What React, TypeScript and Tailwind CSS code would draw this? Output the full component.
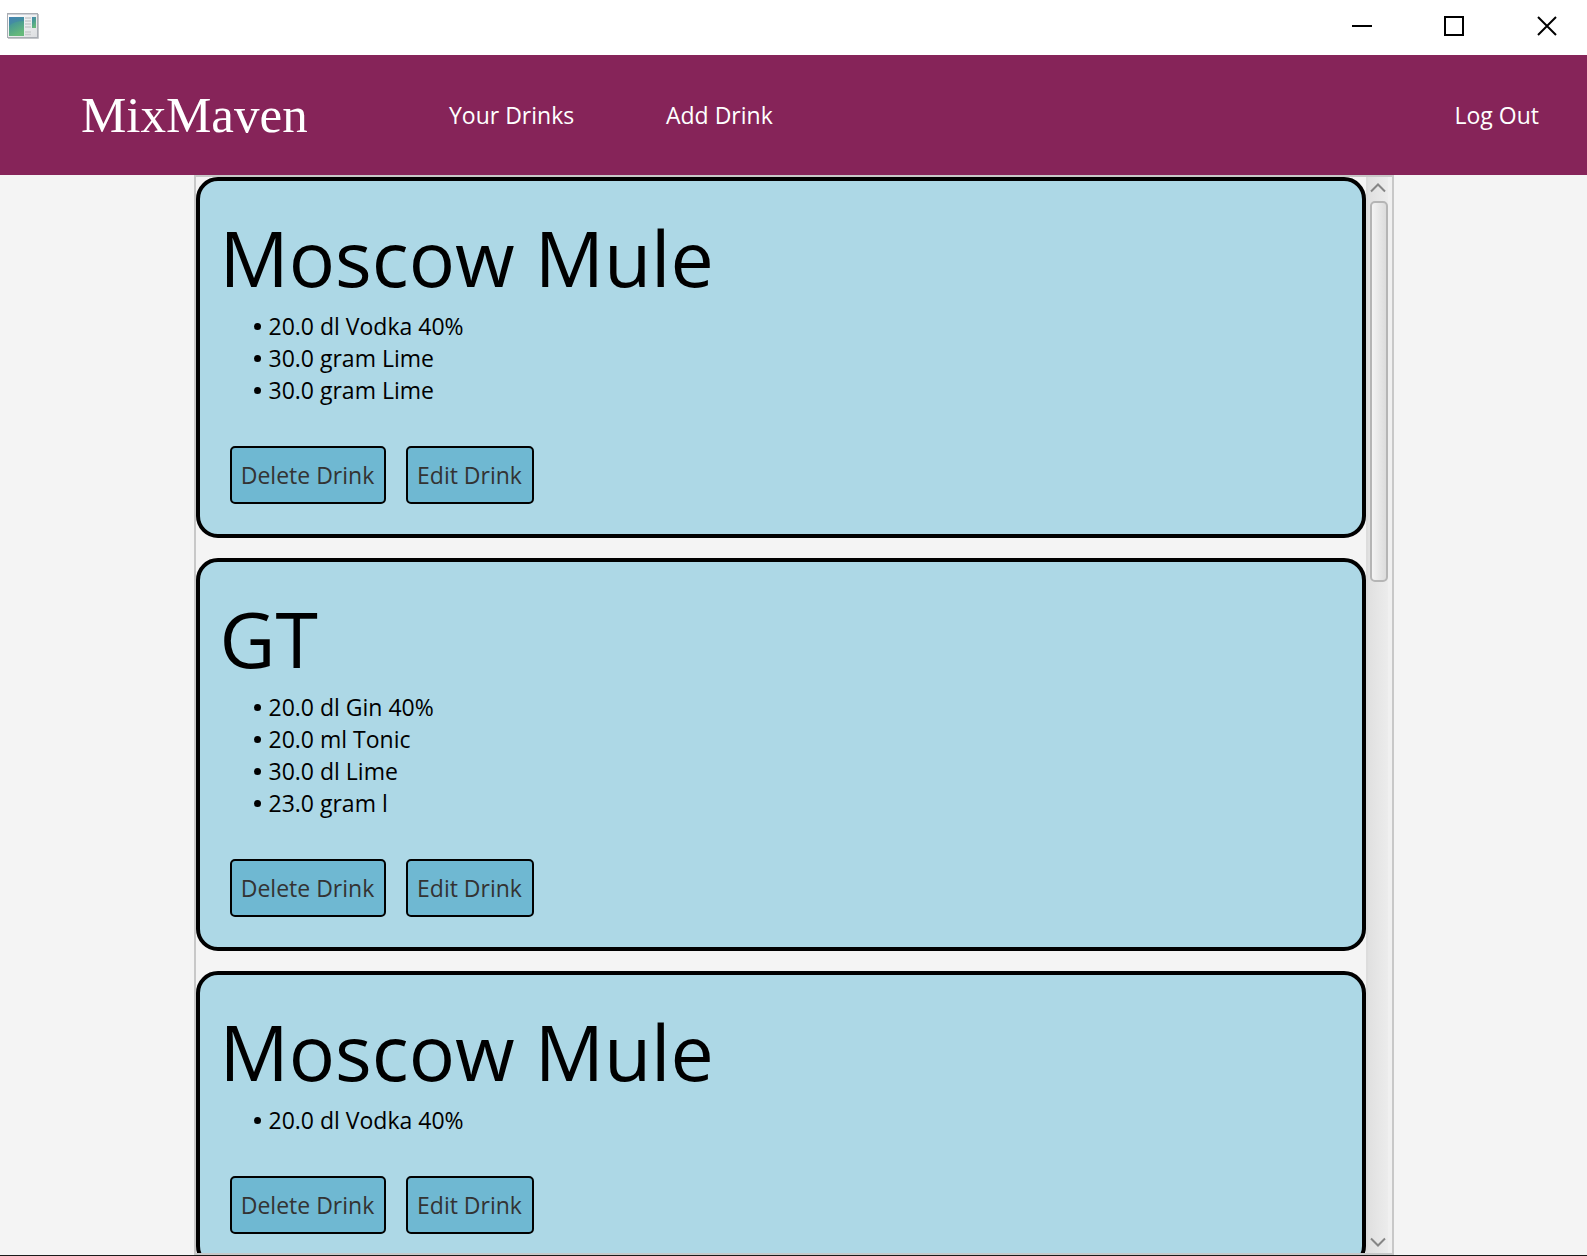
import React from "react";

const drinks = [
  { name: "Moscow Mule", items: ["20.0 dl Vodka 40%", "30.0 gram Lime", "30.0 gram Lime"] },
  { name: "GT", items: ["20.0 dl Gin 40%", "20.0 ml Tonic", "30.0 dl Lime", "23.0 gram l"] },
  { name: "Moscow Mule", items: ["20.0 dl Vodka 40%"] },
];

function AppIcon() {
  return (
    <svg width="32" height="26" viewBox="0 0 32 26" aria-hidden="true">
      <defs>
        <linearGradient id="pane" x1="0" y1="0" x2="0.4" y2="1">
          <stop offset="0" stopColor="#4a86b4" />
          <stop offset="0.45" stopColor="#4a9c92" />
          <stop offset="1" stopColor="#66b97a" />
        </linearGradient>
        <linearGradient id="sheet" x1="0" y1="0" x2="1" y2="1">
          <stop offset="0" stopColor="#ffffff" />
          <stop offset="1" stopColor="#dcdee0" />
        </linearGradient>
      </defs>
      <rect x="0.5" y="0.5" width="30" height="24" fill="url(#sheet)" stroke="#a9adb3" />
      <path d="M31.5 1v24.5H1" fill="none" stroke="#c4c6c9" />
      <path d="M1 1.5h29" stroke="#cdd1d8" />
      <rect x="2" y="4" width="15" height="19" fill="url(#pane)" />
      <path d="M2 13q5-5 15-5V4H2z" fill="#3f7fb0" opacity="0.45" />
      <path d="M18 5h6M18 8h6M18 11h6M18 14h6M18 19h6M18 21.500h6" stroke="#c9cbcd" strokeWidth="1.500" />
      <rect x="25" y="4" width="4" height="11" fill="url(#pane)" />
    </svg>
  );
}

function TitleBar() {
  const button = "flex h-full w-[92px] items-center justify-center";
  return (
    <div className="flex h-[55px] shrink-0 justify-between bg-white pb-[3px] pl-[7px]">
      <div className="flex items-center">
        <AppIcon />
      </div>
      <div className="flex">
        <button type="button" aria-label="Minimize" className={button}>
          <svg width="20" height="20"><path d="M0 10h20" stroke="#000" strokeWidth="2" /></svg>
        </button>
        <button type="button" aria-label="Maximize" className={button}>
          <svg width="20" height="20"><rect x="1" y="1" width="18" height="18" fill="none" stroke="#000" strokeWidth="2" /></svg>
        </button>
        <button type="button" aria-label="Close" className="flex h-full w-[87px] items-center justify-end pr-[30px]">
          <svg width="20" height="20"><path d="M1 1l18 18M19 1L1 19" stroke="#000" strokeWidth="2" /></svg>
        </button>
      </div>
    </div>
  );
}

function Header() {
  return (
    <header className="flex h-[120px] shrink-0 items-center bg-[#862459] pl-[81px] pr-12 text-[23px] text-white">
      <h1 className="w-[368px] font-['Liberation_Serif',serif] text-[51px] leading-none">MixMaven</h1>
      <nav className="flex flex-1">
        <a href="#drinks" className="w-[217px]">Your Drinks</a>
        <a href="#add">Add Drink</a>
      </nav>
      <a href="#logout">Log Out</a>
    </header>
  );
}

function DrinkCard({ name, items }: { name: string; items: string[] }) {
  const button =
    "h-[58px] whitespace-nowrap rounded-[5px] border-2 border-black bg-[#6fb8d2] text-[23px] text-[#333]";
  return (
    <article className="shrink-0 rounded-[22px] border-4 border-black bg-[#add8e6] px-5 pb-[30px] pt-6 text-black">
      <h2 className="text-[77px] leading-[105px]">{name}</h2>
      <ul className="pl-[34px] text-[23px] leading-8">
        {items.map((item, i) => (
          <li key={i} className="flex items-center gap-2">
            <span className="size-[7px] rounded-full bg-black" />
            {item}
          </li>
        ))}
      </ul>
      <div className="mt-10 flex gap-5 pl-[10px]">
        <button type="button" className={`w-[156px] ${button}`}>Delete Drink</button>
        <button type="button" className={`w-[128px] ${button}`}>Edit Drink</button>
      </div>
    </article>
  );
}

function ScrollBar() {
  return (
    <div className="flex w-[26px] shrink-0 flex-col items-center border-l-2 border-r-4 border-l-[#dcdcdc] border-r-[#f0f0f0] bg-linear-to-r from-[#e0e0e0] to-[#ececec]">
      <button type="button" aria-label="Scroll up" className="flex h-6 shrink-0 items-center justify-center pb-0.5">
        <svg width="16" height="10" viewBox="0 0 16 10"><path d="M1 8.500L8 1.500L15 8.500" fill="none" stroke="#858585" strokeWidth="2" /></svg>
      </button>
      <div className="h-[381px] w-[18px] self-end rounded-[5px] border-2 border-[#b5b5b5] bg-linear-to-r from-[#f4f4f4] to-[#dcdcdc]" />
      <div className="flex-1" />
      <button type="button" aria-label="Scroll down" className="flex h-6 shrink-0 items-center justify-center pt-0.5">
        <svg width="16" height="10" viewBox="0 0 16 10"><path d="M1 1.500L8 8.500L15 1.500" fill="none" stroke="#858585" strokeWidth="2" /></svg>
      </button>
    </div>
  );
}

export default function App() {
  return (
    <div className="flex h-screen flex-col overflow-hidden border-b border-[#1a1a1a] bg-[#f4f4f4] font-['Open_Sans',sans-serif]">
      <TitleBar />
      <Header />
      <main className="mx-auto flex min-h-0 w-full max-w-[1200px] flex-1 border-2 border-[#c8c8c8]">
        <div className="flex min-w-0 flex-1 flex-col gap-5 overflow-hidden">
          {drinks.map((drink, i) => (
            <DrinkCard key={i} name={drink.name} items={drink.items} />
          ))}
        </div>
        <ScrollBar />
      </main>
    </div>
  );
}
